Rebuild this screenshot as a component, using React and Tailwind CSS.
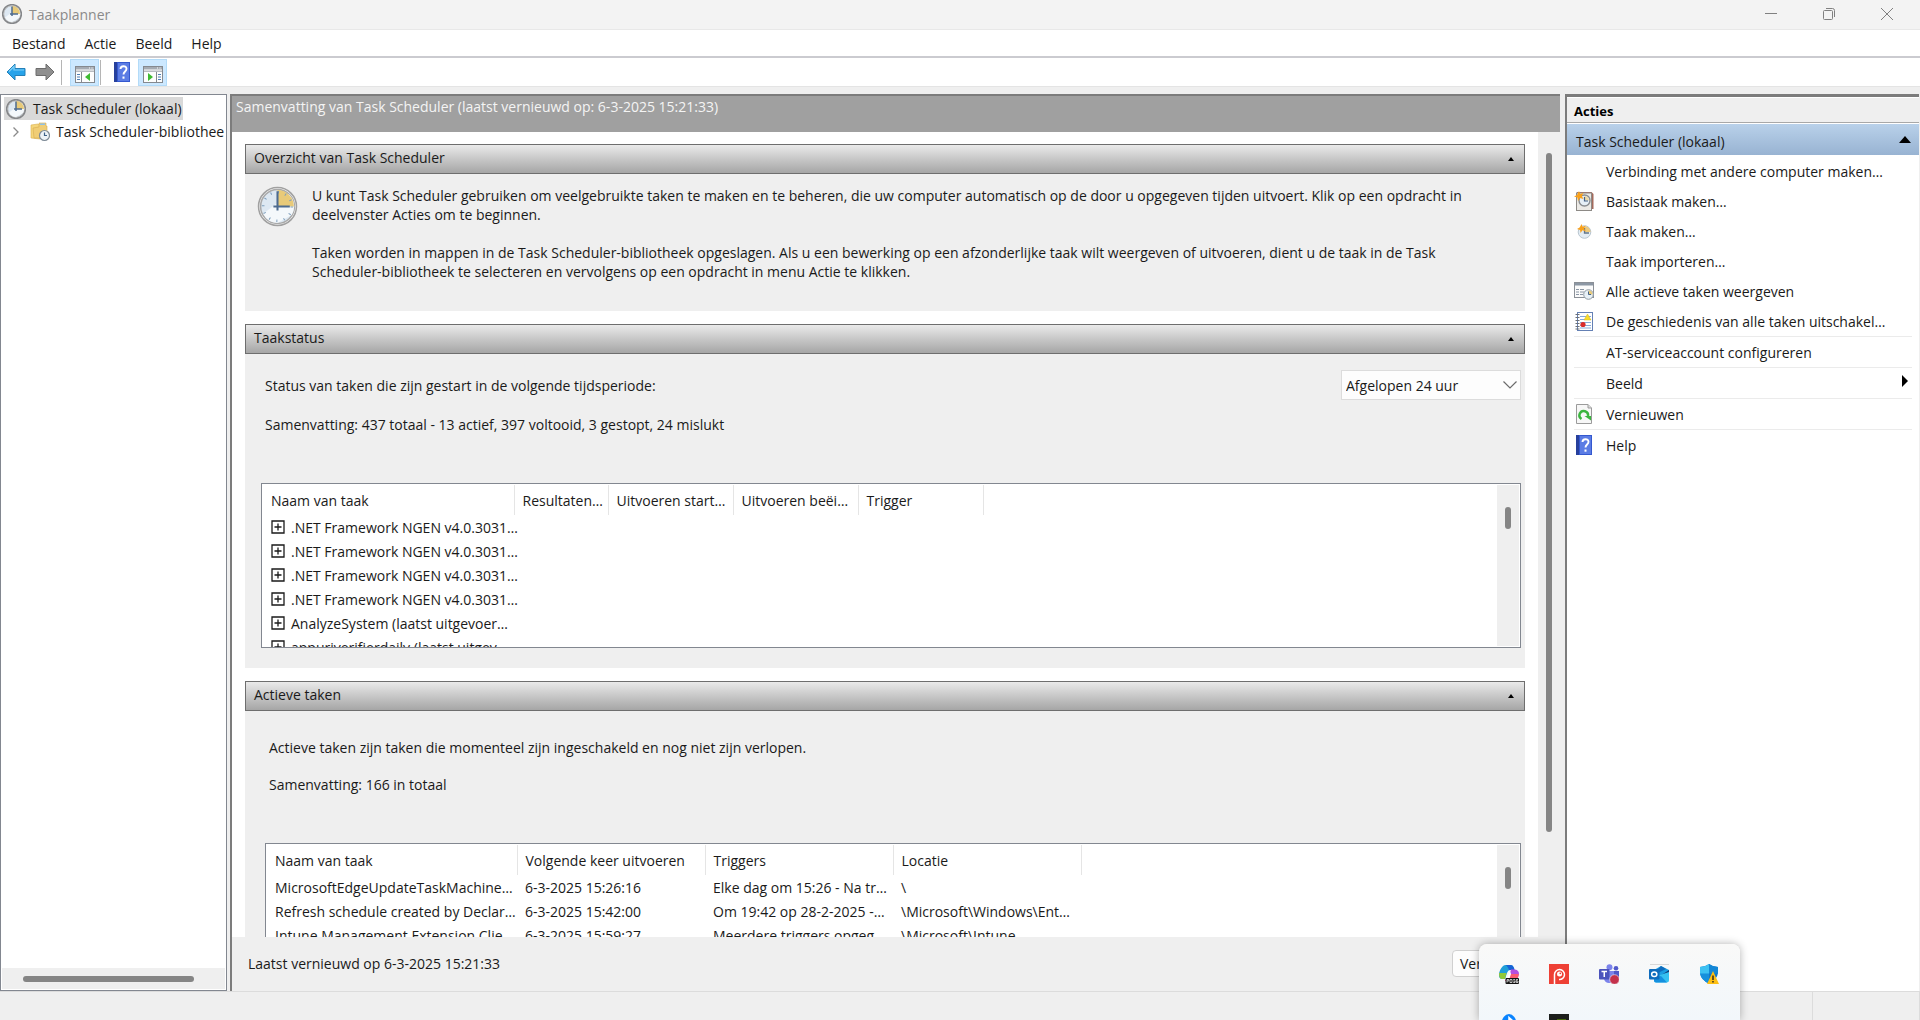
import { useState } from 'react'

const statusRows = [
  '.NET Framework NGEN v4.0.3031…',
  '.NET Framework NGEN v4.0.3031…',
  '.NET Framework NGEN v4.0.3031…',
  '.NET Framework NGEN v4.0.3031…',
  'AnalyzeSystem (laatst uitgevoer…',
  'appuriverifierdaily (laatst uitgev…',
]

const activeRows = [
  ['MicrosoftEdgeUpdateTaskMachine…', '6-3-2025 15:26:16', 'Elke dag om 15:26 - Na tr…', '\\'],
  ['Refresh schedule created by Declar…', '6-3-2025 15:42:00', 'Om 19:42 op 28-2-2025 -…', '\\Microsoft\\Windows\\Ent…'],
  ['Intune Management Extension Clie…', '6-3-2025 15:59:27', 'Meerdere triggers opgeg…', '\\Microsoft\\Intune'],
]

function ClockIcon({ className, ticks }) {
  return (
    <svg viewBox="0 0 40 40" className={className}>
      <circle cx="20" cy="20" r="18.500" fill="#fafafa" stroke={ticks ? '#a0a0a0' : '#85878a'} strokeWidth={ticks ? 1.500 : 3.500} />
      <circle cx="20" cy="20" r="16.500" fill="#dde8f2" stroke="#a9a9a9" strokeWidth="1.500" />
      <path d="M6 27 L31 8 A16 16 0 0 1 34 28 L20 36 A16 16 0 0 1 6 27" fill="#f4f8fb" />
      <path d="M20 20 V4 A16 16 0 0 1 36 20 Z" fill="#e8ca79" />
      {ticks && (
        <circle cx="20" cy="20" r="14" fill="none" stroke="#7f9fbd" strokeWidth="2.500" strokeDasharray="1 6.330" />
      )}
      <path d="M20 5 V24 M16 20 H32" fill="none" stroke="#4d6b8f" strokeWidth={ticks ? 2 : 3} />
    </svg>
  )
}

function FolderIcon() {
  return (
    <svg viewBox="0 0 20 20" className="size-5 shrink-0">
      <path d="M1 3 L8 2 L10 4 V17 L1 16 Z" fill="#f5d67b" stroke="#d9ae4e" strokeWidth="0.600" />
      <path d="M9 1 H16 V4 H17 V16 H4 L3 6 L9 5 Z" fill="#f0cd75" stroke="#d6ab50" strokeWidth="0.600" />
      <rect x="10" y="1.500" width="5" height="1.500" fill="#8fc1ea" />
      <circle cx="14.500" cy="13.500" r="5" fill="#edf3f8" stroke="#7d8a96" strokeWidth="1.200" />
      <path d="M14.500 10.500 V13.500 H17" fill="none" stroke="#3f6288" strokeWidth="1.200" />
    </svg>
  )
}

function HelpIcon({ className }) {
  return (
    <svg viewBox="0 0 16 20" className={className}>
      <rect width="16" height="20" fill="#3458cf" />
      <rect x="4" y="1" width="11" height="18" fill="#5b7ce4" />
      <rect width="3" height="20" fill="#27409c" />
      <path d="M6.500 7 C6.500 3.500 12.500 3.200 12.500 6.800 C12.500 9.500 9.500 9.500 9.500 12.500" fill="none" stroke="#fff" strokeWidth="1.900" />
      <rect x="8.500" y="14.500" width="2" height="2.200" fill="#fff" />
    </svg>
  )
}

function ArrowIcon({ forward }) {
  return (
    <svg viewBox="0 0 20 18" className="h-[18px] w-5">
      {forward ? (
        <path d="M19 9 L11 1 V5.500 H1 V12.500 H11 V17 Z" fill="#8f8f8f" stroke="#6c6c6c" strokeWidth="1" />
      ) : (
        <>
          <path d="M1 9 L9 1 V5.500 H19 V12.500 H9 V17 Z" fill="#27a3ea" stroke="#2480b8" strokeWidth="1" />
          <path d="M3 8.500 L8 3.500 V7 H18" fill="none" stroke="#7fd0f8" strokeWidth="1.200" />
        </>
      )}
    </svg>
  )
}

function PaneIcon({ right }) {
  return (
    <svg viewBox="0 0 20 17" className="h-[17px] w-5">
      <rect x="0.500" y="0.500" width="19" height="16" fill="#fdfdfd" stroke="#85898f" />
      <rect x="1" y="1" width="18" height="2.500" fill="#a5abb3" />
      <rect x="1" y="4.500" width="18" height="1.500" fill="#b8bcc2" />
      <path d="M14 2 h1 M16.500 2 h1" stroke="#fff" />
      {right ? (
        <>
          <path d="M13.500 6 V16" stroke="#85898f" />
          <path d="M15 8.500 h3 M15 11 h3 M15 13.500 h3" stroke="#4e7fb5" />
          <path d="M5 7 L10 11 L5 15 Z" fill="#3fbb32" />
        </>
      ) : (
        <>
          <path d="M6.500 6 V16" stroke="#85898f" />
          <path d="M2 8.500 h3 M2 11 h3 M2 13.500 h3" stroke="#4e7fb5" />
          <path d="M15 7 L10 11 L15 15 Z" fill="#3fbb32" />
        </>
      )}
    </svg>
  )
}

const Star = () => (
  <path d="M5 0 L6.200 3 L9.500 2 L7.800 5 L9.500 8 L6 7 L4 10 L3.400 6.600 L0 5.500 L3 4 Z" fill="#f9a11b" />
)

function BasicTaskIcon() {
  return (
    <svg viewBox="0 0 20 20" className="size-5">
      <path d="M3 1 H17.500 L19.500 3 V18 H3 Z" fill="#a56a5c" />
      <rect x="2.500" y="2" width="15" height="17.500" fill="#eceae6" stroke="#8d8a86" />
      <circle cx="10.500" cy="9.500" r="5.500" fill="#e6eff6" stroke="#8a8d90" strokeWidth="1.400" />
      <path d="M10.500 9.500 V5 A4.500 4.500 0 0 1 15 9.500 Z" fill="#ecd9a8" />
      <path d="M10.500 6 V10 H14" fill="none" stroke="#456387" strokeWidth="1.200" />
      <Star />
    </svg>
  )
}

function TaskIcon() {
  return (
    <svg viewBox="0 0 20 20" className="size-5">
      <circle cx="10.500" cy="11" r="6.300" fill="#e3ecf3" stroke="#b9c6d0" strokeWidth="1" />
      <path d="M10.500 11 V5 A6 6 0 0 1 16.500 11 Z" fill="#edc97c" />
      <path d="M10.500 7 V12 H15" fill="none" stroke="#61748a" strokeWidth="1.300" />
      <g transform="translate(3 3) scale(0.9)">
        <Star />
      </g>
    </svg>
  )
}

function RunningIcon() {
  return (
    <svg viewBox="0 0 20 18" className="h-[18px] w-5">
      <rect x="0.500" y="0.500" width="19" height="15" fill="#fbfbfb" stroke="#8b9097" />
      <rect x="1" y="1" width="18" height="2.500" fill="#8c97a4" />
      <path d="M2 7.500 h3 M6 7.500 h4 M2 10 h3 M6 10 h4 M2 12.500 h3 M6 12.500 h3" stroke="#8b97a5" />
      <circle cx="14.500" cy="12.500" r="4.800" fill="#e7f0f6" stroke="#909aa3" />
      <path d="M14.500 12.500 V8.500 A4 4 0 0 1 18.500 12.500 Z" fill="#e8ca79" />
      <path d="M14.500 9.500 V12.500 H17" fill="none" stroke="#456387" />
    </svg>
  )
}

function HistoryIcon() {
  return (
    <svg viewBox="0 0 18 19" className="h-[19px] w-[18px]">
      <rect x="2.500" y="0.500" width="15" height="18" fill="#fff" stroke="#6480b4" />
      <path d="M5 4.500 h11 M5 7.500 h11 M5 10.500 h11 M5 13.500 h11 M5 16 h11" stroke="#87a9d8" />
      <path d="M0.500 2.500 h4 M0.500 5.500 h4 M0.500 8.500 h4 M0.500 11.500 h4 M0.500 14.500 h4 M0.500 17 h4" stroke="#6b6f76" strokeWidth="1.200" />
      <path d="M12.500 2 L16 8 H9 Z" fill="#f8dc2b" stroke="#d6b91c" strokeWidth="0.500" />
      <circle cx="8" cy="12.500" r="2.600" fill="#d92a2a" />
    </svg>
  )
}

function RefreshIcon() {
  return (
    <svg viewBox="0 0 16 20" className="h-5 w-4">
      <path d="M0.500 0.500 H12 L15.500 4 V19.500 H0.500 Z" fill="#f7f7f7" stroke="#9b9b9b" />
      <path d="M12 0.500 V4 H15.500" fill="#ddd" stroke="#9b9b9b" />
      <path d="M5.500 15 A4.300 4.300 0 1 1 12 12" fill="none" stroke="#3bb53f" strokeWidth="2.500" />
      <path d="M8.500 12 H15 V16.500 Z" fill="#3bb53f" />
    </svg>
  )
}

const actions = [
  { label: 'Verbinding met andere computer maken…' },
  { label: 'Basistaak maken…', icon: <BasicTaskIcon /> },
  { label: 'Taak maken…', icon: <TaskIcon /> },
  { label: 'Taak importeren…' },
  { label: 'Alle actieve taken weergeven', icon: <RunningIcon /> },
  { label: 'De geschiedenis van alle taken uitschakel…', icon: <HistoryIcon /> },
  { label: 'AT-serviceaccount configureren', line: true },
  { label: 'Beeld', line: true, submenu: true },
  { label: 'Vernieuwen', line: true, icon: <RefreshIcon /> },
  { label: 'Help', line: true, icon: <HelpIcon className="h-5 w-4" /> },
]

function Section({ title, children }) {
  return (
    <section className="shrink-0 bg-[#efefef]">
      <button className="flex h-[30px] w-full items-center justify-between border border-[#6e6e6e] bg-linear-to-b from-[#eaeaea] to-[#a6a6a6] px-2 pb-[3px] text-left">
        <span>{title}</span>
        <svg viewBox="0 0 6 4" className="mt-[3px] mr-[2px] h-1 w-[6px]">
          <path d="M3 0 L6 4 H0 Z" />
        </svg>
      </button>
      {children}
    </section>
  )
}

function TableFrame({ children }) {
  return (
    <div className="flex h-[165px] justify-between overflow-hidden border border-[#828790] bg-white p-px">
      {children}
      <div className="w-[22px] shrink-0 bg-[#efefef] pt-[22px]">
        <div className="mx-auto h-[22px] w-[6px] rounded-sm bg-[#858585]" />
      </div>
    </div>
  )
}

function HeadCell({ children }) {
  return (
    <th scope="col" className="h-[30px] border-r border-[#e5e5e5] pl-2 text-left font-normal">
      {children}
    </th>
  )
}

export default function App() {
  const [period, setPeriod] = useState('24')

  return (
    <div className="relative flex h-screen flex-col overflow-hidden bg-[#efefef] font-['Open_Sans','Noto_Sans',sans-serif] text-[14px] leading-[19px] whitespace-nowrap text-[#1a1a1a]">
      {/* Title bar */}
      <header className="flex h-[30px] shrink-0 items-center border-b border-[#e8e8e8] bg-[#f3f3f3] pb-px text-[#8a8a8a]">
        <ClockIcon className="ml-[2px] size-5" />
        <h1 className="ml-[7px] flex-1">Taakplanner</h1>
        <button aria-label="Minimaliseren" className="flex w-[58px] justify-center">
          <svg viewBox="0 0 12 12" className="size-3">
            <path d="M0 5.500 H12" stroke="#808080" />
          </svg>
        </button>
        <button aria-label="Verkleinen" className="flex w-[58px] justify-center">
          <svg viewBox="0 0 12 12" className="size-3" fill="none" stroke="#808080">
            <rect x="0.500" y="2.500" width="9" height="9" rx="1" />
            <path d="M3 0.500 H9.500 A2 2 0 0 1 11.500 2.500 V9" />
          </svg>
        </button>
        <button aria-label="Sluiten" className="mr-1 flex w-[58px] justify-center">
          <svg viewBox="0 0 12 12" className="size-3">
            <path d="M0 0 L12 12 M12 0 L0 12" stroke="#808080" />
          </svg>
        </button>
      </header>

      {/* Menu */}
      <nav className="flex h-7 shrink-0 items-center gap-[19px] border-b-2 border-[#cbcbd0] bg-white pl-3">
        <button>Bestand</button>
        <button>Actie</button>
        <button>Beeld</button>
        <button>Help</button>
      </nav>

      {/* Toolbar */}
      <div className="flex h-[29px] shrink-0 items-center border-b border-[#e4e4e4] bg-white pl-[6px]">
        <button aria-label="Vorige"><ArrowIcon /></button>
        <button aria-label="Volgende" className="ml-[9px]"><ArrowIcon forward /></button>
        <div className="ml-[6px] h-[25px] w-px bg-[#b5b5b5]" />
        <button aria-label="Structuur weergeven" className="ml-2 flex h-[27px] w-[29px] items-center justify-center border border-[#b3dbf8] bg-[#cce8ff] pt-1">
          <PaneIcon />
        </button>
        <div className="ml-px h-[25px] w-px bg-[#b5b5b5]" />
        <button aria-label="Help" className="ml-[13px]"><HelpIcon className="h-5 w-4" /></button>
        <button aria-label="Deelvenster Acties weergeven" className="ml-2 flex h-[27px] w-[29px] items-center justify-center border border-[#b3dbf8] bg-[#cce8ff] pt-1">
          <PaneIcon right />
        </button>
      </div>

      <div className="mt-[7px] flex min-h-0 flex-1">
        {/* Tree */}
        <aside className="flex w-[227px] shrink-0 flex-col border border-[#828790] bg-white p-px">
          <div className="flex-1 overflow-hidden pt-px">
            <button className="ml-[2px] flex h-[23px] items-center bg-[#d9d9d9] pr-px pl-[2px]">
              <ClockIcon className="size-5" />
              <span className="ml-[7px]">Task Scheduler (lokaal)</span>
            </button>
            <button className="flex h-[23px] items-center pl-[11px]">
              <svg viewBox="0 0 6 10" className="h-[10px] w-[6px]">
                <path d="M0.500 0.500 L5 5 L0.500 9.500" fill="none" stroke="#8a8a8a" strokeWidth="1.300" />
              </svg>
              <span className="ml-[11px]"><FolderIcon /></span>
              <span className="ml-[6px]">Task Scheduler-bibliothee</span>
            </button>
          </div>
          <div className="flex h-[21px] items-center bg-[#efefef]">
            <div className="ml-[21px] h-[6px] w-[171px] rounded-sm bg-[#858585]" />
          </div>
        </aside>

        {/* Summary */}
        <main className="ml-[3px] flex min-w-0 flex-1 flex-col border-t-2 border-l-2 border-[#7c7c7c]">
          <h2 className="h-9 shrink-0 bg-[#a0a0a0] pt-px pl-1 text-[#f4f4f4]">
            Samenvatting van Task Scheduler (laatst vernieuwd op: 6-3-2025 15:21:33)
          </h2>
          <div className="flex min-h-0 flex-1 bg-white">
            <div className="flex min-w-0 flex-1 flex-col gap-[13px] overflow-hidden px-[13px] pt-3">
              <Section title="Overzicht van Task Scheduler">
                <div className="flex h-[137px] gap-[14px] pt-3 pl-3">
                  <ClockIcon ticks className="size-[41px] shrink-0" />
                  <div className="min-w-0 flex-1">
                    <p>
                      U kunt Task Scheduler gebruiken om veelgebruikte taken te maken en te beheren, die uw computer automatisch op de door u opgegeven tijden uitvoert. Klik op een opdracht in
                      <br />
                      deelvenster Acties om te beginnen.
                    </p>
                    <p className="mt-[19px]">
                      Taken worden in mappen in de Task Scheduler-bibliotheek opgeslagen. Als u een bewerking op een afzonderlijke taak wilt weergeven of uitvoeren, dient u de taak in de Task
                      <br />
                      Scheduler-bibliotheek te selecteren en vervolgens op een opdracht in menu Actie te klikken.
                    </p>
                  </div>
                </div>
              </Section>

              <Section title="Taakstatus">
                <div className="px-1 pt-4 pb-[20px]">
                  <div className="flex h-[30px] items-center justify-between pl-4">
                    <label htmlFor="period">Status van taken die zijn gestart in de volgende tijdsperiode:</label>
                    <div className="relative">
                      <select
                        id="period"
                        value={period}
                        onChange={(e) => setPeriod(e.target.value)}
                        className="h-[30px] w-[180px] appearance-none border border-[#dcdcdc] bg-[#fdfdfd] pl-1"
                      >
                        <option value="24">Afgelopen 24 uur</option>
                      </select>
                      <svg viewBox="0 0 14 8" className="pointer-events-none absolute top-[11px] right-1 h-2 w-[14px]">
                        <path d="M0.500 0.500 L7 7 L13.500 0.500" fill="none" stroke="#6b6b6b" strokeWidth="1.200" />
                      </svg>
                    </div>
                  </div>
                  <p className="mt-[15px] mb-[49px] pl-4">Samenvatting: 437 totaal - 13 actief, 397 voltooid, 3 gestopt, 24 mislukt</p>
                  <div className="pl-3">
                    <TableFrame>
                      <table className="w-[720px] table-fixed self-start">
                        <colgroup>
                          <col className="w-[251px]" />
                          <col className="w-[94px]" />
                          <col className="w-[125px]" />
                          <col className="w-[125px]" />
                          <col className="w-[125px]" />
                        </colgroup>
                        <thead>
                          <tr>
                            <HeadCell>Naam van taak</HeadCell>
                            <HeadCell>Resultaten…</HeadCell>
                            <HeadCell>Uitvoeren start…</HeadCell>
                            <HeadCell>Uitvoeren beëi…</HeadCell>
                            <HeadCell>Trigger</HeadCell>
                          </tr>
                        </thead>
                        <tbody>
                          {statusRows.map((name, i) => (
                            <tr key={i}>
                              <td colSpan={5} className="h-6 pl-2">
                                <button className="flex items-center">
                                  <svg viewBox="0 0 14 14" className="size-[14px]">
                                    <path d="M1 1 H13 V13 H1 Z M3.500 7 H10.500 M7 3.500 V10.500" fill="none" stroke="#1a1a1a" strokeWidth="1.300" />
                                  </svg>
                                  <span className="ml-[6px]">{name}</span>
                                </button>
                              </td>
                            </tr>
                          ))}
                        </tbody>
                      </table>
                    </TableFrame>
                  </div>
                </div>
              </Section>

              <Section title="Actieve taken">
                <div className="pt-[27px] pr-1 pl-5">
                  <p className="pl-1">Actieve taken zijn taken die momenteel zijn ingeschakeld en nog niet zijn verlopen.</p>
                  <p className="mt-[18px] mb-[49px] pl-1">Samenvatting: 166 in totaal</p>
                  <TableFrame>
                    <table className="w-[814px] table-fixed self-start">
                      <colgroup>
                        <col className="w-[250px]" />
                        <col className="w-[188px]" />
                        <col className="w-[188px]" />
                        <col className="w-[188px]" />
                      </colgroup>
                      <thead>
                        <tr>
                          <HeadCell>Naam van taak</HeadCell>
                          <HeadCell>Volgende keer uitvoeren</HeadCell>
                          <HeadCell>Triggers</HeadCell>
                          <HeadCell>Locatie</HeadCell>
                        </tr>
                      </thead>
                      <tbody>
                        {activeRows.map((row) => (
                          <tr key={row[0]}>
                            {row.map((cell) => (
                              <td key={cell} className="h-6 pl-2">{cell}</td>
                            ))}
                          </tr>
                        ))}
                      </tbody>
                    </table>
                  </TableFrame>
                </div>
              </Section>
            </div>
            <div className="w-[22px] shrink-0 bg-[#efefef] pt-[21px] pb-[105px]">
              <div className="mx-auto h-full w-[6px] rounded-sm bg-[#858585]" />
            </div>
          </div>
          <footer className="flex h-[54px] shrink-0 items-center justify-between pb-[2px] pl-4">
            <span>Laatst vernieuwd op 6-3-2025 15:21:33</span>
            <button className="mr-[14px] h-[27px] w-[94px] rounded border border-[#d0d0d0] bg-[#fdfdfd] pl-[7px] text-left">Vernieuwen</button>
          </footer>
        </main>

        {/* Actions */}
        <aside className="mr-px ml-[5px] flex w-[354px] shrink-0 flex-col border-t-[3px] border-l-2 border-[#7c7c7c] bg-white">
          <h2 className="mt-px flex h-[25px] shrink-0 items-center border-b border-[#a8a8a8] bg-[#efefef] pt-[2px] pl-[7px] text-[13px] font-bold text-black">
            Acties
          </h2>
          <button className="mt-px flex h-[31px] shrink-0 items-center justify-between bg-linear-to-b from-[#b9d1ea] to-[#98b3d2] pt-1 pr-2 pl-[9px]">
            <span>Task Scheduler (lokaal)</span>
            <svg viewBox="0 0 12 7" className="mb-1 h-[7px] w-3">
              <path d="M6 0 L12 7 H0 Z" />
            </svg>
          </button>
          <ul className="px-[7px] pt-px">
            {actions.map((a) => (
              <li key={a.label} className={a.line ? 'border-t border-[#ebebeb]' : ''}>
                <button className="flex h-[30px] w-full items-center text-left">
                  <span className="flex w-5 shrink-0 justify-center">{a.icon}</span>
                  <span className="ml-3 flex-1">{a.label}</span>
                  {a.submenu && (
                    <svg viewBox="0 0 6 12" className="mr-1 mb-1 h-3 w-[6px]">
                      <path d="M0 0 L6 6 L0 12 Z" />
                    </svg>
                  )}
                </button>
              </li>
            ))}
          </ul>
        </aside>
      </div>

      {/* Status bar */}
      <footer className="flex h-[29px] shrink-0 border-t border-[#dcdcdc]">
        <div className="flex-1 border-r border-[#dcdcdc]" />
        <div className="w-[107px] border-r border-[#dcdcdc]" />
      </footer>

      {/* Tray flyout */}
      <div className="absolute right-[180px] bottom-0 h-[76px] w-[261px] overflow-hidden rounded-t-lg bg-linear-to-b from-[#f9f9f8] to-[#f2f7fb] px-5 pt-5 shadow-[0_0_8px_rgba(0,0,0,0.3)]">
        <div className="grid grid-cols-[repeat(5,20px)] gap-x-[30px] gap-y-[30px]">
          <button aria-label="Copilot">
            <svg viewBox="0 0 20 20" className="size-5">
              <path d="M4 2 Q5 1 7 1 H12 Q14 1 15 4 L15.500 6 H11 Q9 6 8 9 L6 15 H3 Q0 15 0 11 Q0 6 4 2" fill="#1f9fd8" />
              <path d="M6 1 H12 Q14 1 15 4 L15.500 6 H10 Q8 1 6 1" fill="#1763d6" />
              <path d="M0 9 H7.500 L6 15 H3 Q0 15 0 9" fill="#8fc93a" />
              <path d="M12 5.500 H16 Q20 6 20 10 Q19 15 17 17 H6 L8 14 Q9.500 14 10 12 Z" fill="#b44fe0" />
              <path d="M11 10 H20 Q19 15 17 17 H6 L8 14 Q9.500 14 11 10" fill="#fb5c72" />
              <path d="M8 14 L11 7 L12 10 L10 16 Z" fill="#fff" />
              <rect x="6.500" y="14" width="13.500" height="6" rx="1" fill="#111" />
              <path d="M8 18.500 V15.500 H9.800 V17 H8 M11 15.500 h2 v3 h-2 z M14.200 15.500 h1.800 M14.200 17 h1.800 v1.500 h-1.800 M19 15.500 h-1.800 v3 h1.800 v-1.500 h-1.800" stroke="#fff" strokeWidth="0.700" fill="none" />
            </svg>
          </button>
          <button aria-label="PicPick">
            <svg viewBox="0 0 20 20" className="size-5">
              <rect width="20" height="20" fill="#ee4035" />
              <path d="M5.500 20 V10.500 A5 5 0 1 1 10 15.500" fill="none" stroke="#fff" strokeWidth="1.500" />
              <circle cx="10.500" cy="10" r="2.500" fill="#fff" />
              <circle cx="11.300" cy="9.300" r="0.900" fill="#ee4035" />
            </svg>
          </button>
          <button aria-label="Teams">
            <svg viewBox="0 0 20 20" className="size-5">
              <circle cx="10.500" cy="3.200" r="3" fill="#7b83eb" />
              <circle cx="17" cy="4.200" r="2.300" fill="#5059c9" />
              <path d="M13 7 H20 V13 Q19 16 15 16 H13 Z" fill="#5059c9" />
              <path d="M5 7 H15 V14 Q14 19 10 19 Q6 19 5 15 Z" fill="#7b83eb" />
              <rect y="5" width="10.500" height="10.500" rx="1" fill="#4b53bc" />
              <path d="M2.500 7.500 H8 M5.250 7.500 V13" stroke="#fff" strokeWidth="1.500" />
              <circle cx="15.500" cy="15.500" r="4.800" fill="#c4314b" stroke="#f5f7fa" strokeWidth="0.600" />
            </svg>
          </button>
          <button aria-label="Outlook">
            <svg viewBox="0 0 20 20" className="size-5">
              <path d="M1 0.500 H20" stroke="#d8d8d8" />
              <path d="M5 6 L12 2 L20 6 V12 H5 Z" fill="#1b9de2" />
              <path d="M12 2 L17 5 L9 9 V5 Z" fill="#0f6cbd" />
              <path d="M11 12 L20 6 V9 L13 14 Z" fill="#123f78" />
              <path d="M5 13 L20 8 V16 Q20 18.500 17.500 18.500 H7 Q5 18.500 5 16.500 Z" fill="#35c1f1" />
              <path d="M5 14 L12 12 L18 18.500 H7 Q5 18.500 5 16.500 Z" fill="#1490df" />
              <rect y="5" width="10.500" height="10.500" rx="1" fill="#0f6cbd" />
              <ellipse cx="5.250" cy="10.250" rx="2.600" ry="2.300" fill="none" stroke="#fff" strokeWidth="1.500" />
            </svg>
          </button>
          <button aria-label="Windows-beveiliging">
            <svg viewBox="0 0 20 20" className="size-5">
              <path d="M10 0 Q14 3 19 3 V9 Q18 16 10 19.500 Q2 16 1 9 V3 Q6 3 10 0" fill="#1276c9" />
              <path d="M10 0 V10 H1 V3 Q6 3 10 0" fill="#3cc1f2" />
              <path d="M10 0 Q14 3 19 3 V9.500 H10 Z" fill="#1387d6" />
              <path d="M1 9.500 H10 V19.500 Q2 16 1 9.500" fill="#1690dc" />
              <path d="M14 7 L20 20 H8 Z" fill="#fdbf12" />
              <path d="M14 11.500 V16 M14 17 V18.500" stroke="#222" strokeWidth="1.400" />
            </svg>
          </button>
          <button aria-label="Bluetooth">
            <svg viewBox="0 0 20 20" className="size-5">
              <ellipse cx="10" cy="10" rx="7.500" ry="10" fill="#0a84ff" />
              <path d="M6 7 L14 13 L10 17 V3.500 L14 7 L6 13" fill="none" stroke="#fff" strokeWidth="1.500" />
            </svg>
          </button>
          <button aria-label="NVIDIA">
            <svg viewBox="0 0 20 20" className="size-5">
              <rect width="20" height="20" fill="#1c1e1c" />
              <path d="M8 5.500 H17 V15 H8 Z" fill="#76b900" />
            </svg>
          </button>
        </div>
      </div>
    </div>
  )
}
